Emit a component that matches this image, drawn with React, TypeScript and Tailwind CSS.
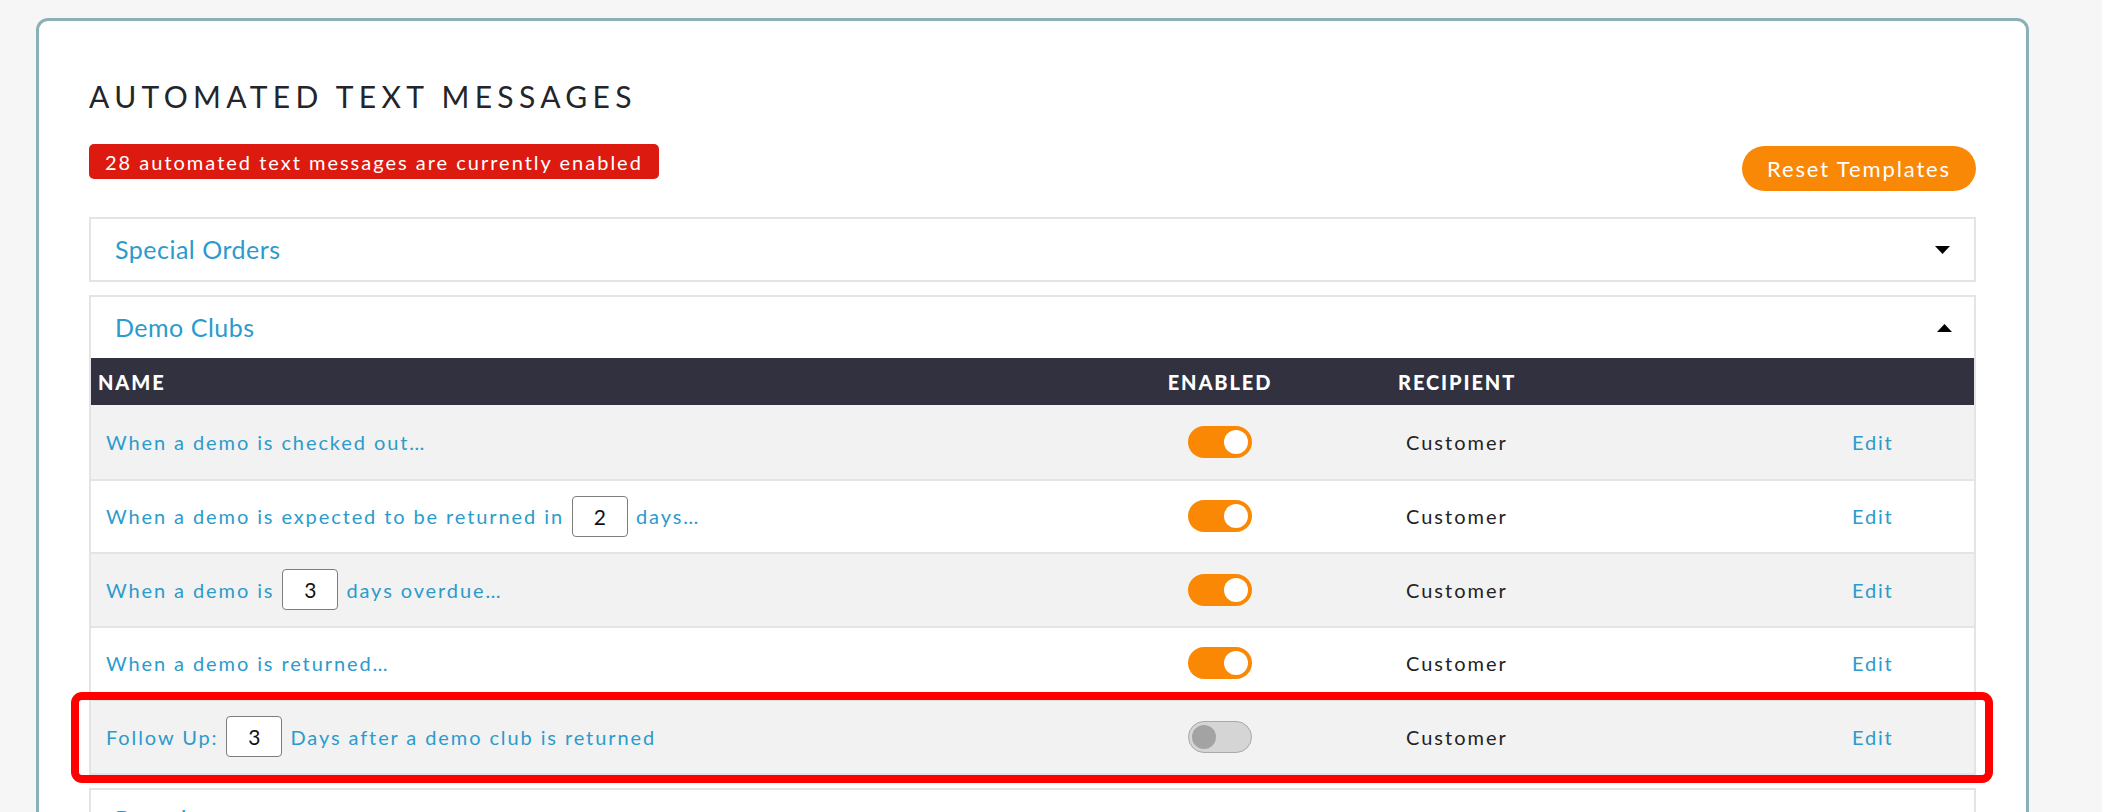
import React from "react";

const font = "font-['Lato','Open_Sans',sans-serif]";

function Caret({ up }: { up?: boolean }) {
  return (
    <svg width="15" height="8" viewBox="0 0 15 8" className="block">
      {up ? <polygon points="7.5,0 15,8 0,8" fill="#000" /> : <polygon points="0,0 15,0 7.5,8" fill="#000" />}
    </svg>
  );
}

function Toggle({ on }: { on: boolean }) {
  if (on) {
    return (
      <div className="w-[64px] h-[32px] rounded-full bg-[#fb8805] flex items-center justify-end pr-[4px]">
        <div className="w-[24px] h-[24px] rounded-full bg-white" />
      </div>
    );
  }
  return (
    <div className="w-[64px] h-[32px] rounded-full bg-[#d5d5d5] border border-[#a9a9a9] flex items-center justify-start pl-[3px]">
      <div className="w-[24px] h-[24px] rounded-full bg-[#a3a3a3]" />
    </div>
  );
}

function NumBox({ v }: { v: string }) {
  return (
    <span className="inline-flex items-center justify-center w-[56px] h-[41px] mx-[8px] border border-[#7d7d7d] rounded-[4px] bg-white text-[21px] text-[#111] tracking-normal">
      {v}
    </span>
  );
}

type Row = { name: React.ReactNode; on: boolean; hl?: boolean };

const rows: Row[] = [
  { name: <>When a demo is checked out…</>, on: true },
  {
    name: (
      <>
        When a demo is expected to be returned in<NumBox v="2" />days…
      </>
    ),
    on: true,
  },
  {
    name: (
      <>
        When a demo is<NumBox v="3" />days overdue…
      </>
    ),
    on: true,
  },
  { name: <>When a demo is returned…</>, on: true },
  {
    name: (
      <>
        Follow Up:<NumBox v="3" />Days after a demo club is returned
      </>
    ),
    on: false,
    hl: true,
  },
];

const cols = "grid grid-cols-[1069px_120px_110px_452px_132px]";

export default function App() {
  return (
    <div className={`min-h-[812px] bg-[#f6f6f6] pt-[18px] ${font}`}>
      <div className="ml-[36px] w-[1993px] bg-white border-[3px] border-[#8cb0b8] rounded-[12px] px-[50px] pt-[57px] pb-[200px]">
        <h1 className="text-[30px] leading-[36px] tracking-[0.178em] text-[#23252b] font-normal">
          AUTOMATED TEXT MESSAGES
        </h1>
        <div className="mt-[30px] flex items-start justify-between">
          <div className="h-[35px] px-[16px] rounded-[5px] bg-[#dc1a10] text-white text-[20px] tracking-[0.1em] flex items-center">
            28 automated text messages are currently enabled
          </div>
          <button className="mt-[2px] h-[45px] w-[234px] rounded-full bg-[#fa8807] text-white text-[22px] tracking-[0.085em] flex items-center justify-center">
            Reset Templates
          </button>
        </div>

        <div className="mt-[26px] flex flex-col gap-[13px]">
          <div className="h-[65px] border-2 border-[#e3e4e6] flex items-center justify-between pl-[24px] pr-[24px]">
            <span className="text-[25px] tracking-[0.02em] text-[#2b9bcd]">Special Orders</span>
            <Caret />
          </div>

          <div className="border-2 border-[#e3e4e6]">
            <div className="h-[61px] flex items-center justify-between pl-[24px] pr-[22px]">
              <span className="text-[25px] tracking-[0.02em] text-[#2b9bcd]">Demo Clubs</span>
              <Caret up />
            </div>
            <div className={`${cols} h-[47px] bg-[#32313f] text-white font-black text-[20px] tracking-[0.095em] items-center`}>
              <div className="pl-[7px]">NAME</div>
              <div className="text-center">ENABLED</div>
              <div />
              <div className="pl-[8px]">RECIPIENT</div>
              <div />
            </div>
            {rows.map((r, i) => (
              <div
                key={i}
                className={`relative ${cols} h-[73.5px] items-center ${i % 2 === 0 ? "bg-[#f2f2f2]" : "bg-white"} ${i > 0 ? "border-t-2 border-[#e4e4e4]" : ""}`}
              >
                <div className="pl-[15px] text-[20px] tracking-[0.095em] text-[#2b9bcd] flex items-center whitespace-nowrap">
                  {r.name}
                </div>
                <div className="flex justify-center">
                  <Toggle on={r.on} />
                </div>
                <div />
                <div className="pl-[16px] text-[20px] tracking-[0.1em] text-[#222]">Customer</div>
                <div className="pl-[10px] text-[20px] tracking-[0.09em] text-[#2b9bcd]">Edit</div>
                {r.hl && (
                  <div className="absolute -left-[20px] -right-[19px] -top-[9px] -bottom-[10px] border-[8px] border-[#ff0000] rounded-[11px] pointer-events-none z-10" />
                )}
              </div>
            ))}
          </div>

          <div className="h-[65px] border-2 border-[#e3e4e6] flex items-center justify-between pl-[24px] pr-[24px]">
            <span className="text-[25px] tracking-[0.02em] text-[#2b9bcd]">Rentals</span>
            <Caret />
          </div>
        </div>
      </div>
    </div>
  );
}
